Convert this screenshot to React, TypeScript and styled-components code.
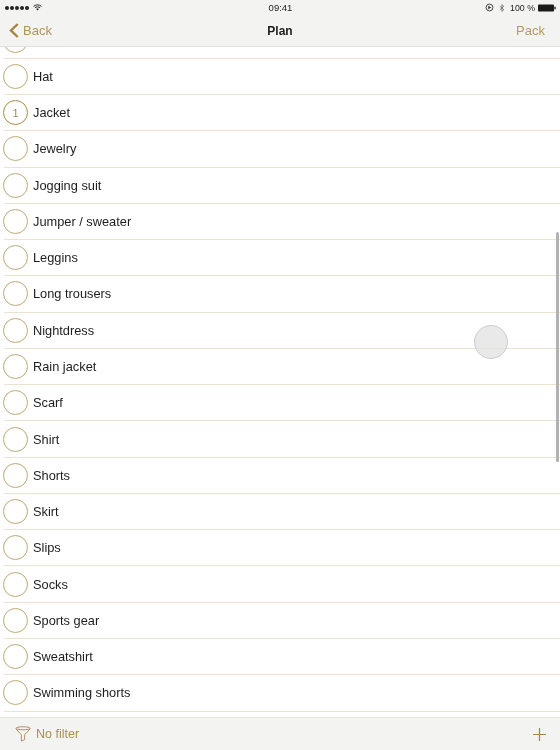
import React from "react";
import styled, { createGlobalStyle } from "styled-components";

const Global = createGlobalStyle`
  html, body { margin: 0; padding: 0; background: #fff; }
  body { font-family: "Liberation Sans", Arial, sans-serif; }
`;

const GOLD = "#a5843f";

const Screen = styled.div`
  position: relative;
  width: 560px;
  height: 750px;
  display: flex;
  flex-direction: column;
  overflow: hidden;
  background: #fff;
  filter: blur(0.35px);
`;

const Header = styled.header`
  flex: 0 0 47px;
  display: flex;
  flex-direction: column;
  background: #f3f3f2;
  border-bottom: 1px solid #e0e0de;
  box-sizing: border-box;
`;

const StatusBar = styled.div`
  height: 15px;
  display: grid;
  grid-template-columns: 1fr auto 1fr;
  align-items: center;
  padding: 0 4px 0 5px;
  font-size: 9.5px;
  color: #222;
`;

const StatusLeft = styled.div`
  display: flex;
  align-items: center;
  gap: 4px;
`;

const Dots = styled.div`
  display: flex;
  gap: 1px;
`;

const Dot = styled.span`
  width: 4px;
  height: 4px;
  border-radius: 50%;
  background: #222;
`;

const StatusRight = styled.div`
  display: flex;
  align-items: center;
  justify-content: flex-end;
  gap: 5px;
`;

const Percent = styled.span`
  font-size: 8.8px;
  margin-right: -2px;
`;

const NavBar = styled.div`
  flex: 1;
  display: grid;
  grid-template-columns: 1fr auto 1fr;
  align-items: center;
  padding: 0 15px;
`;

const BackButton = styled.div`
  display: flex;
  align-items: center;
  gap: 4px;
  margin-left: -6px;
  font-size: 13px;
  color: #b0955a;
`;

const Title = styled.div`
  font-size: 12px;
  font-weight: 700;
  color: #1c1c1c;
`;

const ActionLink = styled.div`
  justify-self: end;
  font-size: 13px;
  color: #b59a60;
`;

const ListViewport = styled.div`
  flex: 1;
  min-height: 0;
  overflow: hidden;
`;

const List = styled.ul`
  list-style: none;
  margin: -24.5px 0 0 4px;
  padding: 0;
`;

const Row = styled.li`
  height: 36.28px;
  box-sizing: border-box;
  display: flex;
  align-items: center;
  gap: 5px;
  border-bottom: 1px solid #ebe2cf;
`;

const Circle = styled.span<{ $active?: boolean }>`
  flex: 0 0 25px;
  height: 25px;
  margin-left: -1px;
  box-sizing: border-box;
  border-radius: 50%;
  border: ${(p) => (p.$active ? "1.5px solid #a8894a" : "1px solid #bda877")};
  display: flex;
  align-items: center;
  justify-content: center;
  font-size: 11px;
  color: #a08a58;
`;

const RowLabel = styled.span`
  font-size: 12.8px;
  color: #1d1d1d;
`;

const Footer = styled.footer`
  flex: 0 0 33px;
  box-sizing: border-box;
  display: flex;
  align-items: center;
  justify-content: space-between;
  padding: 0 14px 0 15px;
  background: #f3f3f2;
  border-top: 1px solid #e2e2e0;
`;

const FilterButton = styled.div`
  display: flex;
  align-items: center;
  gap: 5px;
  font-size: 12.5px;
  color: #ab8f52;
`;

const ScrollThumb = styled.div`
  position: absolute;
  top: 232px;
  right: 1px;
  width: 3px;
  height: 230px;
  background: #b2b2b2;
  border-radius: 1.5px;
`;

const TouchDot = styled.div`
  position: absolute;
  left: 474px;
  top: 325px;
  width: 34px;
  height: 34px;
  box-sizing: border-box;
  border-radius: 50%;
  background: rgba(226, 226, 226, 0.75);
  border: 1.5px solid #cdcdcd;
`;

const items = [
  "", "Hat", "Jacket", "Jewelry", "Jogging suit", "Jumper / sweater", "Leggins",
  "Long trousers", "Nightdress", "Rain jacket", "Scarf", "Shirt", "Shorts", "Skirt",
  "Slips", "Socks", "Sports gear", "Sweatshirt", "Swimming shorts", "",
];

export default function App() {
  return (
    <Screen>
      <Global />
      <Header>
        <StatusBar>
          <StatusLeft>
            <Dots>{[0, 1, 2, 3, 4].map((i) => <Dot key={i} />)}</Dots>
            <svg width="9" height="7" viewBox="0 0 11 8" fill="none" stroke="#222" strokeWidth="1.2">
              <path d="M0.7 2.6 C3.5 0.2 7.5 0.2 10.3 2.6" />
              <path d="M2.3 4.3 C4 2.9 7 2.9 8.7 4.3" />
              <path d="M5.5 7.6 L3.9 5.8 C4.8 5.1 6.2 5.1 7.1 5.8 Z" fill="#222" stroke="none" />
            </svg>
          </StatusLeft>
          <span>09:41</span>
          <StatusRight>
            <svg width="9" height="9" viewBox="0 0 10 10" fill="none">
              <circle cx="5" cy="5" r="3.8" stroke="#333" strokeWidth="1" />
              <path d="M3.6 3 L7 5 L3.6 7 Z" fill="#333" />
            </svg>
            <svg width="6" height="10" viewBox="0 0 7 10" fill="none" stroke="#666" strokeWidth="0.9">
              <path d="M1 2.8 L5.6 7 L3.4 9 V1 L5.6 3 L1 7.2" />
            </svg>
            <Percent>100 %</Percent>
            <svg width="18" height="8" viewBox="0 0 18 8">
              <rect x="0" y="0.5" width="16" height="7" rx="1" fill="#1a1a1a" />
              <rect x="16.4" y="2.7" width="1.3" height="2.6" fill="#1a1a1a" />
            </svg>
          </StatusRight>
        </StatusBar>
        <NavBar>
          <BackButton>
            <svg width="10" height="15" viewBox="0 0 10 15" fill="none" stroke="#a5843f" strokeWidth="2.4">
              <path d="M8.7 1 L2 7.5 L8.7 14" />
            </svg>
            <span>Back</span>
          </BackButton>
          <Title>Plan</Title>
          <ActionLink>Pack</ActionLink>
        </NavBar>
      </Header>
      <ListViewport>
        <List>
          {items.map((name, i) => (
            <Row key={i}>
              <Circle $active={name === "Jacket"}>{name === "Jacket" ? "1" : ""}</Circle>
              {name && <RowLabel>{name}</RowLabel>}
            </Row>
          ))}
        </List>
      </ListViewport>
      <Footer>
        <FilterButton>
          <svg width="16" height="16" viewBox="0 0 17 17" fill="none" stroke={GOLD} strokeWidth="0.9">
            <ellipse cx="8.5" cy="2.4" rx="7.5" ry="1.6" />
            <path d="M1 3 L6.8 9.5 V16 L10.2 14.5 V9.5 L16 3" />
          </svg>
          <span>No filter</span>
        </FilterButton>
        <svg width="13" height="13" viewBox="0 0 13 13" stroke={GOLD} strokeWidth="1.2">
          <path d="M6.5 0 V13 M0 6.5 H13" />
        </svg>
      </Footer>
      <ScrollThumb />
      <TouchDot />
    </Screen>
  );
}
